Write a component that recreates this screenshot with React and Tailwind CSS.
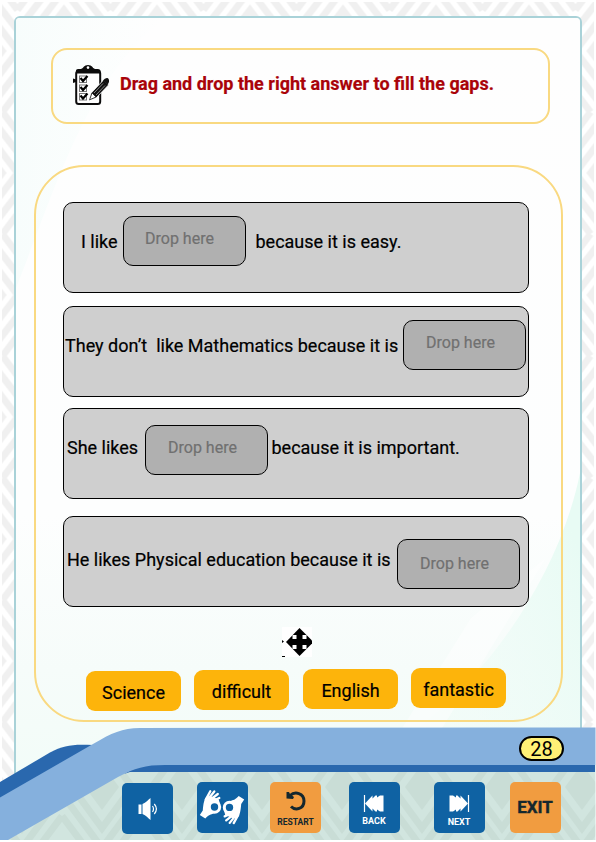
import React from "react";

function Backdrop() {
  return (
    <svg className="absolute inset-0 pointer-events-none" width="596" height="842" viewBox="0 0 596 842">
      <defs>
        <pattern id="weave" x="110.5" y="-10" width="93" height="122" patternUnits="userSpaceOnUse">
          <g fill="none" stroke="#f0f0f0" strokeWidth="7">
            <path d="M46.5 53 L52.5 61 L46.5 69 L40.5 61Z" fill="#f0f0f0" stroke="none" />
            <path d="M46.5 40 L62.5 61 L46.5 82 L30.500 61Z" />
            <path d="M46.5 20 L77.8 61 L46.5 102 L15.200 61Z" />
            <path d="M46.5 0 L93 61 L46.5 122 L0 61Z" />
            <path d="M0 40 L31 0 M93 40 L62 0 M0 82 L31 122 M93 82 L62 122" />
            <path d="M0 20 L15 0 M93 20 L78 0 M0 102 L15 122 M93 102 L78 122" />
          </g>
        </pattern>
      </defs>
      <rect width="596" height="842" fill="#fff" />
      <rect x="2" y="2" width="592" height="838" fill="url(#weave)" />
    </svg>
  );
}

function Ribbon() {
  return (
    <svg className="absolute inset-0 pointer-events-none" width="596" height="842" viewBox="0 0 596 842">
      <defs>
        <pattern id="weaveGreen" x="302" y="726" width="80" height="122" patternUnits="userSpaceOnUse">
          <rect width="80" height="122" fill="#d1e5df" />
          <g fill="none" stroke="#c9ddd6" strokeWidth="7">
            <path d="M40 38 L57 61 L40 84 L23 61Z" fill="#c9ddd6" stroke="none" />
            <path d="M40 20 L70 61 L40 102 L10 61Z" />
            <path d="M0 26 L20 0 M80 26 L60 0 M0 68 L40 122 L80 68" />
            <path d="M0 90 L24 122 M80 90 L56 122" />
          </g>
        </pattern>
      </defs>
      <path d="M0 840 L0 800 L120 765 H595.5 V840Z" fill="url(#weaveGreen)" />
      <path d="M0 782 L50 752.5 C64 745 73 744 93 745 L0 799Z" fill="#2a68ae" />
      <path d="M124 774 C135 767 145 763 170 763 H595 V772 H130Z" fill="#2a68ae" />
      <path d="M0 797.500 L93 744 C112 733 122 728 140 728 L595.500 727.500 V765 H165 C145 765 135 768 118 777 L8 840 H0Z" fill="#85b0dd" />
      <path d="M0 840 H596 V842 H0Z" fill="#fff" />
    </svg>
  );
}

function PageGlow() {
  return (
    <svg className="absolute inset-0 pointer-events-none" width="564" height="766" viewBox="0 0 564 766">
      <defs>
        <linearGradient id="mint" x1="0" y1="0" x2="0" y2="1">
          <stop offset="0" stopColor="#fefefe" />
          <stop offset=".65" stopColor="#fdfefe" />
          <stop offset=".85" stopColor="#f6fcfa" />
          <stop offset="1" stopColor="#f2fcf8" />
        </linearGradient>
        <linearGradient id="edge" x1="0" y1="0" x2="1" y2="0">
          <stop offset="0" stopColor="#f7fdfc" />
          <stop offset="1" stopColor="#fafefd" stopOpacity="0" />
        </linearGradient>
        <linearGradient id="corner" x1="1" y1=".3" x2="0" y2="1">
          <stop offset="0" stopColor="#e8fbf4" />
          <stop offset="1" stopColor="#f0fcf8" stopOpacity=".3" />
        </linearGradient>
      </defs>
      <rect width="564" height="766" fill="url(#mint)" />
      <path d="M0 0H150C70 60 40 170 0 270Z" fill="url(#edge)" />
      <path d="M564 455 C545 550 480 650 400 712 H564Z" fill="url(#corner)" />
      <path d="M455 600 L385 712 H425 L530 540Z" fill="#fff" opacity=".45" />
    </svg>
  );
}

function ClipboardIcon() {
  return (
    <svg width="36" height="40" viewBox="0 0 36 40" className="shrink-0 -mt-[2px]">
      <rect x="3.200" y="6" width="24" height="33" rx="2.500" fill="#fff" stroke="#0c0c0c" strokeWidth="2" />
      <path d="M3 5.500 Q3 4 5 4 H8 Q10 3 11 1.500 Q12 0 15 0 Q18 0 19 1.500 Q20 3 22 4 H25 Q27 4 27.500 5.500 V8.500 H3Z" fill="#0c0c0c" />
      <circle cx="15" cy="2.600" r="1.300" fill="#fff" />
      <path d="M0 13.500 L3 14.500 V17 L0 18Z" fill="#0c0c0c" />
      {[11, 20, 28.500].map((y) => (
        <g key={y}>
          <rect x="6.500" y={y} width="7" height="6.500" fill="#fff" stroke="#777" strokeWidth="1" />
          <path d={"M7.500 " + (y + 2) + " L10 " + (y + 5) + " L14.500 " + y} fill="none" stroke="#000" strokeWidth="2.200" />
        </g>
      ))}
      <path d="M16 35.500 L18.200 28 L30.500 15 L35.500 20 L23.500 32.500Z" fill="#111" stroke="#fff" strokeWidth=".8" />
      <path d="M16.600 34.800 L19 28 L23 32Z" fill="#fff" stroke="#111" strokeWidth=".7" />
      <path d="M21 28 L30 18.500 M23 30 L32 20.500" stroke="#bbb" strokeWidth=".7" />
      <path d="M30 15.500 Q32 12.500 34.500 13 Q36.500 14 36 17 L34.500 20Z" fill="#111" />
    </svg>
  );
}

function MoveIcon() {
  return (
    <svg width="30" height="30" viewBox="0 0 30 30">
      <rect width="30" height="30" fill="#fff" />
      <path d="M17.500 1 L30 13.500 V16.500 L17.500 29 L4 15Z" fill="#000" />
      <path d="M10.500 8h4v4h-4z M20.500 8h4v4h-4z M10.500 18h4v4h-4z M20.500 18h4v4h-4z" fill="#fff" />
      <path d="M0 13 L2 14.500 L0 16Z M0 29 H3 V30 H0Z" fill="#000" />
    </svg>
  );
}

function Hand({ transform }) {
  return (
    <g transform={transform}>
      <path d="M0 25.500 L3 21 C3.500 14 4.500 9 7 7 L12 7 L19 10 L20 14 L16 13 C11 12 9 16 10.500 19.500 L14 24 C11 25 9 25 5.500 29Z" fill="#fff" />
      <g fill="none" stroke="#fff" strokeLinecap="round" strokeWidth="2.300">
        <path d="M6 10 L10.500 1.800 M8.500 9.500 L14.500 2 M11 10 L18 4.500 M13 11.500 L19.500 8.500" />
      </g>
      <circle cx="14.700" cy="17.500" r="5.200" fill="none" stroke="#fff" strokeWidth="3" />
    </g>
  );
}

function SignLanguageIcon() {
  return (
    <svg width="46" height="37" viewBox="0 0 46 37">
      <g transform="translate(.8 .5)">
        <Hand />
        <Hand transform="rotate(180 22.200 17.700)" />
      </g>
    </svg>
  );
}

function Gap({ className }) {
  return (
    <span className={"shrink-0 w-[123px] h-[50px] rounded-[10px] border border-black bg-[#b0b0b0] text-base leading-6 text-[#707070] " + className}>
      Drop here
    </span>
  );
}

function Row({ className = "", children }) {
  return (
    <div className={"flex items-start w-[466px] h-[91px] rounded-[10px] border border-black bg-[#cfcfcf] text-[18px] leading-6 text-black whitespace-pre [-webkit-text-stroke:0.2px] " + className}>
      {children}
    </div>
  );
}

function Chip({ className, children }) {
  return (
    <button className={"w-[95px] h-10 rounded-[9px] bg-[#fdb40b] text-[18px] leading-6 text-black [-webkit-text-stroke:0.2px] " + className}>
      {children}
    </button>
  );
}

function SkipArrows() {
  return <path d="M2 9.500 L9.500 1.500 V4.500 L12.500 1.500 H14 V3.500 L17 1.500 H20.500 V17.500 H17 L14 15.500 V17.500 H12.500 L9.500 14.500 V17.500Z" fill="#fff" />;
}

const tile = "shrink-0 w-[51px] h-[51px] rounded-[5px] flex flex-col items-center ";

function Toolbar() {
  return (
    <nav className="relative flex items-start h-[60px] pl-[122px]">
      <button className={tile + "bg-[#0f62a3] mt-px justify-center"}>
        <svg width="22" height="24" viewBox="0 0 22 24">
          <path d="M1.500 7.500 H4.500 V17 H1.500Z M5.500 7 C9 6 11 2.500 13.500 1 V23 C11 21.500 9 18 5.500 17Z" fill="#fff" />
          <path d="M15.500 9 Q17.500 12 15.500 15 M17.300 7 Q21.500 12 17.300 17" fill="none" stroke="#fff" strokeWidth="1.200" />
        </svg>
      </button>
      <button className={tile + "bg-[#0f62a3] ml-[23.500px] justify-center"}>
        <SignLanguageIcon />
      </button>
      <button className={tile + "bg-[#f19c40] ml-[22.500px]"}>
        <svg className="mt-[7px]" width="26" height="24" viewBox="0 0 26 24">
          <path d="M7 6.500 C12 2 21 4 21 12 C21 20 12.500 22 8 17.500" fill="none" stroke="#14272e" strokeWidth="3" />
          <path d="M3.500 3 L6 3 L7 5 L11 8 L10 10 L3.500 9.500Z" fill="#14272e" />
        </svg>
        <span className="mt-[3px] text-[8.500px] leading-[12px] font-bold text-[#14272e]">RESTART</span>
      </button>
      <button className={tile + "bg-[#0f62a3] ml-[27.500px] text-white"}>
        <svg className="mt-[12px]" width="22" height="18" viewBox="0 0 22 18">
          <path d="M1.500 1 V18" stroke="#fff" strokeWidth="1.200" />
          <SkipArrows />
        </svg>
        <span className="mt-[3px] text-[9px] leading-[12px] font-bold">BACK</span>
      </button>
      <button className={tile + "bg-[#0f62a3] ml-[34px] text-white"}>
        <svg className="mt-[12px]" width="22" height="18" viewBox="0 0 22 18">
          <path d="M20.500 1 V18" stroke="#fff" strokeWidth="1.200" />
          <g transform="matrix(-1 0 0 1 22 0)">
            <SkipArrows />
          </g>
        </svg>
        <span className="mt-[4px] text-[9px] leading-[12px] font-bold">NEXT</span>
      </button>
      <button className={tile + "bg-[#f19c40] ml-[25px] justify-center text-[#14272e] font-bold text-[17px] leading-6 pb-px [-webkit-text-stroke:0.4px]"}>EXIT</button>
    </nav>
  );
}

export default function App() {
  return (
    <div className="relative w-[596px] h-[842px] overflow-hidden font-['Roboto',sans-serif]">
      <Backdrop />
      <main className="relative ml-[14px] mb-[-50px] pt-[30px] w-[568px] h-[770px] border-2 border-[#a9d2d8] rounded-[6px] overflow-hidden box-border translate-y-[16px]">
        <PageGlow />
        <header className="relative ml-[35px] flex items-center w-[499px] h-[76px] rounded-[16px] border-2 border-[#f9d981] pl-[20px]">
          <ClipboardIcon />
          <h1 className="ml-[11px] mb-[5px] text-[18px] leading-6 font-bold text-[#a90309] whitespace-nowrap [-webkit-text-stroke:0.2px]">
            Drag and drop the right answer to fill the gaps.
          </h1>
        </header>
        <section className="relative mt-[41px] ml-[18px] w-[529px] h-[557px] rounded-[50px] border-2 border-[#f9d981] pt-[35px] pl-[27px]">
          <Row>
            <span className="mt-[27px] ml-[17px] w-[42px]">I like</span>
            <Gap className="mt-[13px] pl-[21px] pt-[10px]" />
            <span className="mt-[27px] ml-[9.500px]">because it is easy.</span>
          </Row>
          <Row className="mt-[13px]">
            <span className="mt-[27px] ml-px w-[338px]">They don’t  like Mathematics because it is</span>
            <Gap className="mt-[13px] pl-[22px] pt-[10px]" />
          </Row>
          <Row className="mt-[11px]">
            <span className="mt-[27px] ml-[3px] w-[78px]">She likes</span>
            <Gap className="mt-[16px] pl-[22px] pt-[10px]" />
            <span className="mt-[27px] ml-[3.500px]">because it is important.</span>
          </Row>
          <Row className="mt-[17px]">
            <span className="mt-[31px] ml-[3px] w-[330px]">He likes Physical education because it is</span>
            <Gap className="mt-[22px] pl-[22px] pt-[12px]" />
          </Row>
          <div className="mt-[20px] ml-[219px] w-[33px] h-[30px]">
            <MoveIcon />
          </div>
          <div className="mt-[11px] ml-[23px] flex items-start">
            <Chip className="mt-[3px] pt-[4px]">Science</Chip>
            <Chip className="mt-[2px] ml-[13px] pt-[3px]">difficult</Chip>
            <Chip className="mt-px ml-[14px] pt-[3px]">English</Chip>
            <Chip className="ml-[13px] pt-[3px]">fantastic</Chip>
          </div>
        </section>
      </main>
      <Ribbon />
      <div className="relative mt-[66px] ml-[519px] flex items-center justify-center w-[45px] h-[25px] rounded-full border-2 border-black bg-[#fff176] text-[20px] leading-5 text-black -translate-y-[50px]">
        28
      </div>
      <div className="-mt-[29px]">
        <Toolbar />
      </div>
    </div>
  );
}
